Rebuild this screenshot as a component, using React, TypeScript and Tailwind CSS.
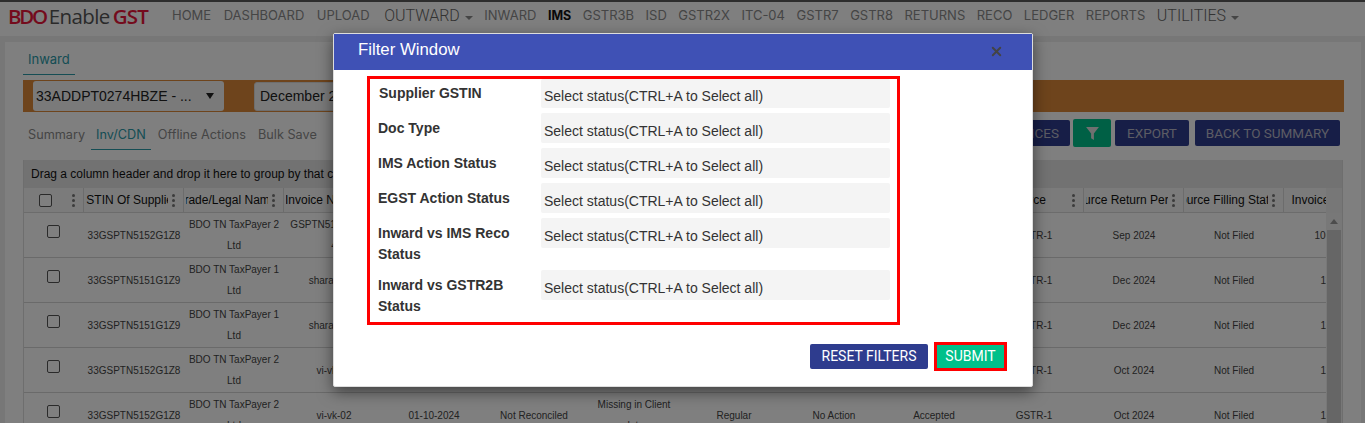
import { X } from "lucide-react";

const navA = ["HOME", "DASHBOARD", "UPLOAD"];
const navB = ["INWARD", "IMS", "GSTR3B", "ISD", "GSTR2X", "ITC-04", "GSTR7", "GSTR8", "RETURNS", "RECO", "LEDGER", "REPORTS"];
const headers = ["GSTIN Of Supplier", "Trade/Legal Name", "Invoice Number", "Invoice Date", "Reco Status", "Match Status", "Invoice Type", "EGST Action", "IMS Action", "Source", "Source Return Period", "Source Filling Status", "Invoice Value"];
const rows = [
  ["33GSPTN5152G1Z8", "BDO TN TaxPayer 2 Ltd", "GSPTN5152INV-00 4", "01-09-2024", "Not Reconciled", "Missing in Client data", "Regular", "No Action", "Accepted", "GSTR-1", "Sep 2024", "Not Filed", "1000000"],
  ["33GSPTN5151G1Z9", "BDO TN TaxPayer 1 Ltd", "sharad-001", "01-12-2024", "Not Reconciled", "Missing in Client data", "Regular", "No Action", "Accepted", "GSTR-1", "Dec 2024", "Not Filed", "11800"],
  ["33GSPTN5151G1Z9", "BDO TN TaxPayer 1 Ltd", "sharad-002", "01-12-2024", "Not Reconciled", "Missing in Client data", "Regular", "No Action", "Accepted", "GSTR-1", "Dec 2024", "Not Filed", "11800"],
  ["33GSPTN5152G1Z8", "BDO TN TaxPayer 2 Ltd", "vi-vk-01", "01-10-2024", "Not Reconciled", "Missing in Client data", "Regular", "No Action", "Accepted", "GSTR-1", "Oct 2024", "Not Filed", "11800"],
  ["33GSPTN5152G1Z8", "BDO TN TaxPayer 2 Ltd", "vi-vk-02", "01-10-2024", "Not Reconciled", "Missing in Client data", "Regular", "No Action", "Accepted", "GSTR-1", "Oct 2024", "Not Filed", "11800"],
];
const filters = [
  { label: "Supplier GSTIN", row: "h-[29px]", sel: "h-[29px]", pad: "pt-[4px] pl-[9px]" },
  { label: "Doc Type", row: "h-[30px]", sel: "h-[30px]", pad: "pt-[5px] pl-[8px]" },
  { label: "IMS Action Status", row: "h-[30px]", sel: "h-[30px]", pad: "pt-[5px] pl-[8px]" },
  { label: "EGST Action Status", row: "h-[30px]", sel: "h-[30px]", pad: "pt-[5px] pl-[8px]" },
  { label: "Inward vs IMS Reco Status", row: "h-[47px]", sel: "h-[30px]", pad: "pt-[5px] pl-[8px]" },
  { label: "Inward vs GSTR2B Status", row: "h-[47px]", sel: "h-[30px]", pad: "pt-[5px] pl-[8px]" },
];

function Grip() {
  return (
    <span className="flex w-[3px] shrink-0 flex-col gap-[2px]">
      <span className="h-[3px] w-[3px] rounded-full bg-[#777]" />
      <span className="h-[3px] w-[3px] rounded-full bg-[#777]" />
      <span className="h-[3px] w-[3px] rounded-full bg-[#777]" />
    </span>
  );
}

function Caret() {
  return <span className="ml-[5px] mt-[3px] h-0 w-0 border-x-[4px] border-t-[4px] border-x-transparent border-t-[#8a8a8a]" />;
}

export default function App() {
  return (
    <div className="relative h-[423px] w-[1365px] overflow-hidden bg-[#eeeeee] font-['Liberation_Sans',sans-serif]">
      <div className="h-[2px] bg-[#5a5a5a]" />
      <header className="flex h-[34px] items-center bg-white pb-[6px] pl-[8px]">
        <div className="mb-[1px] flex w-[164px] shrink-0 items-baseline font-['Open_Sans',sans-serif] text-[20.500px] leading-[26px]">
          <span className="font-semibold tracking-[-2.300px] text-[#e8173a]">BDO</span>
          <span className="ml-[3px] font-medium tracking-[-0.600px] text-[#555]">Enable</span>
          <span className="ml-[3px] font-semibold tracking-[-0.800px] text-[#e8173a]">GST</span>
        </div>
        <nav className="flex items-center gap-[11.500px] font-['Inter',sans-serif] text-[13px] font-normal text-[#8a8a8a]">
          <div className="flex items-center gap-[12.500px]">
            {navA.map((n) => (
              <span key={n}>{n}</span>
            ))}
            <span className="ml-[2px] flex items-center font-['Roboto',sans-serif] text-[16px] font-light text-[#666]">
              OUTWARD
              <Caret />
            </span>
          </div>
          {navB.map((n) =>
            n === "IMS" ? (
              <span key={n} className="relative text-[12.500px] font-bold text-[#111]">
                {n}
                <span className="absolute -bottom-[9px] left-0 h-[1px] w-full bg-[#c8102e]" />
              </span>
            ) : (
              <span key={n}>{n}</span>
            ),
          )}
          <span className="flex items-center font-['Roboto',sans-serif] text-[16px] font-light text-[#666]">
            UTILITIES
            <Caret />
          </span>
        </nav>
      </header>

      <main className="ml-[5px] mt-[6px] h-[400px] w-[1356px] bg-white px-[18px] pt-[8px]">
        <div className="w-[52px] border-b border-[#2a9aa8] pb-[6px] pl-[5px] pt-[1px] font-['Inter',sans-serif] text-[13px] leading-[17px] text-[#2a9aa8]">
          Inward
        </div>
        <div className="mt-[5px] flex h-[32px] w-[1321px] items-center gap-[30px] bg-[#dc8838] pl-[10px]">
          <div className="flex h-[30px] w-[191px] items-center justify-between rounded-[3px] bg-[#f5f5f5] pl-[3px] pr-[10px] text-[14px] text-[#222]">
            <span>33ADDPT0274HBZE - ...</span>
            <span className="h-0 w-0 border-x-[4px] border-t-[6px] border-x-transparent border-t-[#222]" />
          </div>
          <div className="flex h-[29px] w-[200px] items-center rounded-[3px] border border-[#ddd] bg-[#f5f5f5] pl-[5px] text-[14px] text-[#222]">
            December 2024
          </div>
        </div>

        <div className="mt-[6px] flex h-[37px] w-[1321px] items-start justify-between">
          <div className="flex h-[32px] items-center font-['Inter',sans-serif] text-[12.700px] text-[#8a8a8a]">
            <span className="px-[5px] pt-[2px]">Summary</span>
            <span className="ml-[1px] flex h-[32px] items-center border-b border-[#2a9aa8] px-[5px] pt-[2px] text-[#2a9aa8]">Inv/CDN</span>
            <span className="ml-[2px] px-[5px] pt-[2px]">Offline Actions</span>
            <span className="ml-[2px] px-[5px] pt-[2px]">Bulk Save</span>
          </div>
          <div className="mr-[4px] mt-[1px] flex items-center gap-[6px] font-['Roboto',sans-serif] text-[13.500px] text-[#b8b8c8]">
            <button className="flex h-[26px] items-center rounded-[2px] bg-[#2e3c8e] px-[11px]">VIEW INVOICES</button>
            <button className="-ml-[3px] -mr-[2px] flex h-[28px] w-[38px] items-center justify-center rounded-[2px] bg-[#00c08a]">
              <svg width="15" height="15" viewBox="0 0 14 14">
                <path d="M1 1h12L8.300 7v6L5.700 11.500V7z" fill="#e0e0e0" />
              </svg>
            </button>
            <button className="flex h-[26px] w-[74px] items-center justify-center rounded-[2px] bg-[#2e3c8e]">EXPORT</button>
            <button className="flex h-[26px] w-[145px] items-center justify-center rounded-[2px] bg-[#2e3c8e]">BACK TO SUMMARY</button>
          </div>
        </div>

        <section className="mt-[5px] w-[1320px] border-x border-[#ddd] text-[#111]">
          <div className="flex h-[28px] items-center bg-[#e5e5e5] pl-[7px] text-[12px]">
            Drag a column header and drop it here to group by that column
          </div>
          <div className="flex h-[236px]">
            <div className="min-w-0 flex-1 overflow-hidden">
              <div className="flex h-[25px] w-[1500px] border-b border-[#d8d8d8] bg-[#f6f6f6] text-[12px]">
                <div className="flex w-[60px] shrink-0 items-center border-r border-[#d8d8d8] pl-[15px] pr-[8px]">
                  <span className="h-[13px] w-[13px] rounded-[2px] border border-[#555] bg-white" />
                  <span className="ml-auto"><Grip /></span>
                </div>
                {headers.map((h) => (
                  <div key={h} className="flex w-[100px] shrink-0 items-center border-r border-[#d8d8d8] pl-[2px] pr-[8px]">
                    <div className="flex w-[82px] justify-center overflow-hidden whitespace-nowrap">
                      <span className="shrink-0">{h}</span>
                    </div>
                    <span className="ml-auto"><Grip /></span>
                  </div>
                ))}
              </div>
              {rows.map((r, i) => (
                <div key={i} className="flex h-[45px] w-[1500px] border-b border-[#d4d4d4] bg-white text-[10px] leading-[21px] text-[#444]">
                  <div className="w-[60px] shrink-0 pl-[23px] pt-[12px]">
                    <span className="block h-[13px] w-[13px] rounded-[2px] border border-[#555] bg-white" />
                  </div>
                  {r.map((c, j) => (
                    <div key={j} className="flex w-[100px] shrink-0 items-center justify-center px-[4px] text-center">
                      <span>{c}</span>
                    </div>
                  ))}
                </div>
              ))}
            </div>
            <div className="flex w-[16px] shrink-0 flex-col bg-[#f1f1f1]">
              <div className="h-[25px] bg-[#eeeeee]" />
              <div className="flex h-[17px] items-center justify-center">
                <span className="h-0 w-0 border-x-[4px] border-b-[5px] border-x-transparent border-b-[#999]" />
              </div>
              <div className="mx-[1px] flex-1 bg-[#cdcdcd]" />
            </div>
          </div>
        </section>
      </main>

      <div className="absolute inset-0 bg-black/50" />

      <div className="absolute left-[333px] top-[33px] h-[354px] w-[700px] rounded-[2px] border border-[#dddddd] bg-white shadow-[0_5px_15px_rgba(0,0,0,0.5)]">
        <div className="flex h-[36px] items-center justify-between bg-[#3f51b5] pb-[4px] pl-[24px] pr-[28px]">
          <span className="text-[16.800px] text-white">Filter Window</span>
          <X size={15} strokeWidth={3} className="mt-[2px] text-[#444]" />
        </div>
        <div className="ml-[33px] mt-[6px] h-[249px] w-[533px] border-[3px] border-[#ff0000]">
          <div className="flex flex-col gap-[5px]">
            {filters.map((f) => (
              <div key={f.label} className={`flex ${f.row}`}>
                <div className={`w-[171px] shrink-0 pr-[8px] text-[14px] font-bold leading-[21px] text-[#333] ${f.pad}`}>
                  {f.label}
                </div>
                <div className={`flex w-[349px] items-end rounded-[2px] bg-[#f4f4f4] pb-[3px] pl-[3px] text-[14px] leading-[18px] text-[#333] ${f.sel}`}>
                  Select status(CTRL+A to Select all)
                </div>
              </div>
            ))}
          </div>
        </div>
        <div className="mt-[17px] flex items-center justify-end gap-[6px] pr-[25px] font-['Roboto',sans-serif] text-[14px] text-white">
          <button className="h-[25px] w-[118px] rounded-[2px] bg-[#2e3c8e]">RESET FILTERS</button>
          <button className="h-[29px] w-[73px] border-[3px] border-[#ff0000] bg-[#00c08a]">SUBMIT</button>
        </div>
      </div>
    </div>
  );
}
